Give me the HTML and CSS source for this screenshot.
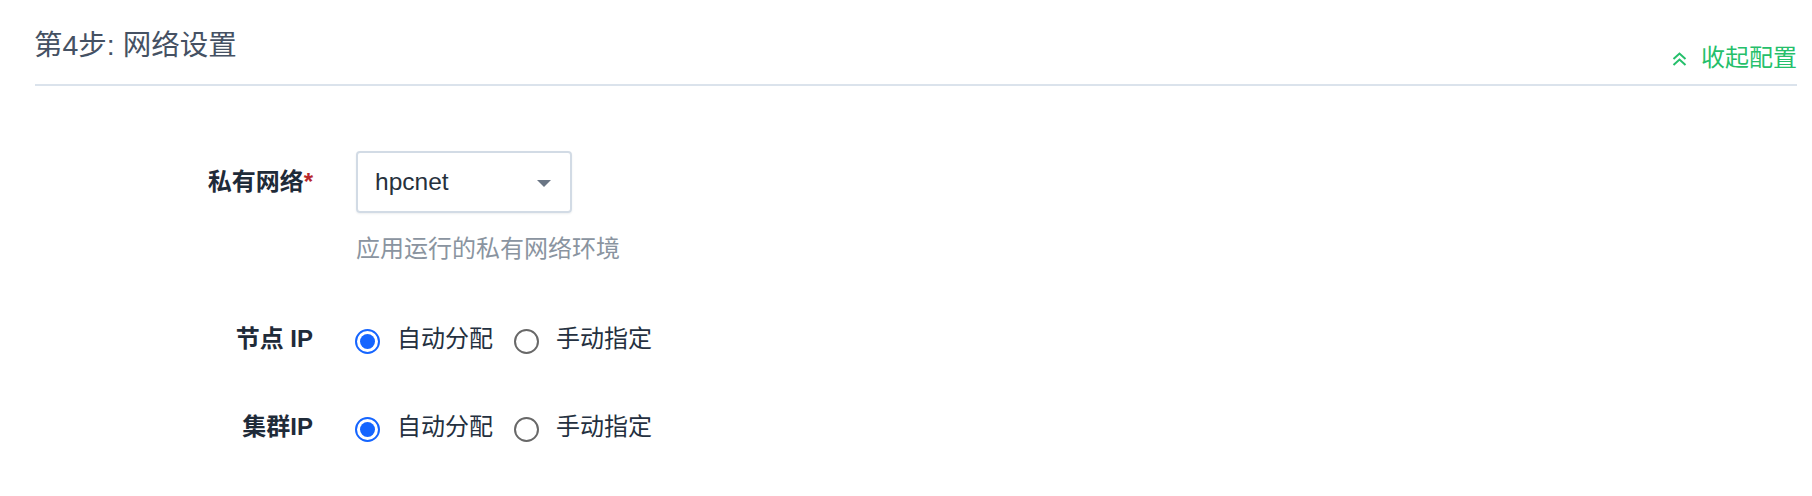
FILE: index.html
```html
<!DOCTYPE html>
<html lang="zh-CN">
<head>
<meta charset="utf-8">
<title>网络设置</title>
<link rel="stylesheet" href="styles.css">
</head>
<body>
<div class="header">
  <div class="title">第4步: 网络设置</div>
  <a class="collapse" href="#">
    <svg class="chev" width="15" height="14" viewBox="0 0 15 14"><path d="M1.5 7 L7.5 1.5 L13.5 7 M1.5 13 L7.5 7.5 L13.5 13" fill="none" stroke="currentColor" stroke-width="2"/></svg>
    <span>收起配置</span>
  </a>
</div>
<div class="form">
  <div class="row row-select">
    <div class="label tall">私有网络<span class="req">*</span></div>
    <div class="control">
      <div class="select">
        <span class="value">hpcnet</span>
        <span class="caret"></span>
      </div>
      <div class="help">应用运行的私有网络环境</div>
    </div>
  </div>
  <div class="row row-radio first">
    <div class="label">节点 IP</div>
    <div class="control radios">
      <label class="radio"><span class="dot checked"></span><span class="rtext">自动分配</span></label>
      <label class="radio"><span class="dot"></span><span class="rtext">手动指定</span></label>
    </div>
  </div>
  <div class="row row-radio second">
    <div class="label">集群IP</div>
    <div class="control radios">
      <label class="radio"><span class="dot checked"></span><span class="rtext">自动分配</span></label>
      <label class="radio"><span class="dot"></span><span class="rtext">手动指定</span></label>
    </div>
  </div>
</div>
</body>
</html>
```
FILE: styles.css
```css
* { box-sizing: border-box; }
html, body {
  margin: 0;
  padding: 0;
  background: #ffffff;
}
body {
  font-family: "Liberation Sans", "Noto Sans CJK SC", sans-serif;
  color: #1f2b39;
  width: 1812px;
  height: 496px;
  overflow: hidden;
}
.header {
  display: flex;
  justify-content: space-between;
  align-items: flex-end;
  margin: 0 15px 0 35px;
  height: 86px;
  border-bottom: 2px solid #dbe3ec;
}
.title {
  align-self: flex-start;
  padding-top: 25px;
  font-size: 28.5px;
  line-height: 40px;
  color: #455163;
  margin-left: -1px;
}
.collapse {
  display: flex;
  align-items: center;
  text-decoration: none;
  color: #25bf6b;
  font-size: 24px;
  line-height: 34px;
  margin-bottom: 9px;
}
.chev {
  margin-right: 14px;
  margin-top: 1px;
  margin-left: 2px;
}
.form {
  padding-top: 65px;
}
.row {
  display: flex;
  align-items: flex-start;
}
.label {
  width: 313px;
  text-align: right;
  font-size: 24px;
  font-weight: bold;
  line-height: 34px;
  color: #1f2b39;
}
.label.tall {
  line-height: 62px;
}
.req {
  color: #b8282d;
}
.control {
  margin-left: 43px;
}
.select {
  width: 216px;
  height: 62px;
  border: 2px solid #d2dbe5;
  border-radius: 4px;
  box-shadow: 0 1px 2px rgba(30, 45, 60, 0.08);
  display: flex;
  align-items: center;
  justify-content: space-between;
  padding: 0 19px 0 17px;
}
.value {
  font-size: 24.5px;
  color: #26303c;
}
.caret {
  width: 0;
  height: 0;
  border-left: 7.5px solid transparent;
  border-right: 7.5px solid transparent;
  border-top: 7px solid #6a7584;
  margin-top: 3px;
}
.help {
  margin-top: 19px;
  font-size: 24px;
  line-height: 34px;
  color: #8a94a0;
}
.row-radio.first {
  margin-top: 56px;
}
.row-radio.second {
  margin-top: 54px;
}
.radios {
  display: flex;
  align-items: flex-start;
  margin-left: 42px;
}
.radio {
  display: flex;
  align-items: flex-start;
  font-size: 24px;
  line-height: 34px;
  color: #243040;
  margin-right: 21px;
}
.dot {
  width: 25px;
  height: 25px;
  border-radius: 50%;
  border: 2px solid #686868;
  margin-top: 7px;
  margin-right: 17px;
  display: flex;
  align-items: center;
  justify-content: center;
  flex: none;
}
.dot.checked {
  border-color: #1565ff;
}
.dot.checked::after {
  content: "";
  width: 15px;
  height: 15px;
  border-radius: 50%;
  background: #1565ff;
}
```
